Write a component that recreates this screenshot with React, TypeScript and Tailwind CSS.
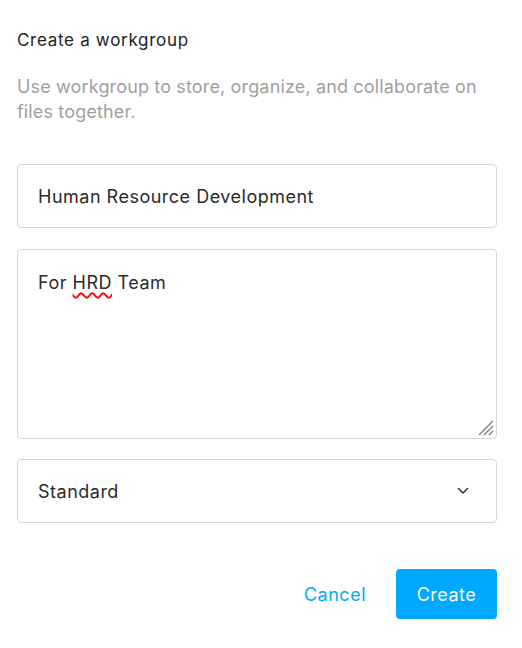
export default function App() {
  return (
    <div className="w-[522px] h-[648px] bg-white pl-[17px] pr-[25px] pt-[28px]" style={{ fontFamily: 'Inter, "Noto Sans", sans-serif' }}>
      <h1 className="text-[17px] leading-[24px] text-[#222] tracking-[0.7px]">Create a workgroup</h1>
      <p className="mt-[22px] text-[18px] leading-[25px] text-[#a0a0a0] tracking-[0.15px]">
        Use workgroup to store, organize, and collaborate on files together.
      </p>
      <div className="mt-[40px] h-[64px] rounded-[4px] border border-[#d3d6da] flex items-center px-[20px] text-[18px] text-[#2a2a2a] tracking-[0.5px]">
        Human Resource Development
      </div>
      <div className="relative mt-[21px] h-[190px] rounded-[4px] border border-[#d3d6da] px-[20px] pt-[20px] text-[18px] leading-[25px] text-[#2a2a2a] tracking-[0.5px]">
        For{' '}
        <span className="underline decoration-wavy decoration-[#ff0000] decoration-[1.5px] underline-offset-[3px]">HRD</span> Team
        <svg className="absolute right-[2px] bottom-[2px]" width="17" height="17" viewBox="0 0 17 17">
          <line x1="16" y1="2" x2="2" y2="16" stroke="#777" strokeWidth="1.3" />
          <line x1="16" y1="7" x2="7" y2="16" stroke="#777" strokeWidth="1.3" />
          <line x1="16" y1="12" x2="12" y2="16" stroke="#777" strokeWidth="1.3" />
        </svg>
      </div>
      <div className="mt-[20px] h-[64px] rounded-[4px] border border-[#d3d6da] flex items-center justify-between pl-[20px] pr-[27px] text-[18px] text-[#2a2a2a] tracking-[0.5px]">
        <span>Standard</span>
        <svg width="12" height="8" viewBox="0 0 12 8" fill="none">
          <path d="M1.5 1.5 L6 6 L10.5 1.5" stroke="#333" strokeWidth="1.5" strokeLinecap="round" strokeLinejoin="round" />
        </svg>
      </div>
      <div className="mt-[46px] flex justify-end items-center gap-[30px]">
        <button className="text-[18px] text-[#00a8ff] tracking-[0.5px]">Cancel</button>
        <button className="w-[101px] h-[50px] rounded-[4px] bg-[#00a8ff] text-white text-[18px] tracking-[0.5px]">Create</button>
      </div>
    </div>
  );
}
